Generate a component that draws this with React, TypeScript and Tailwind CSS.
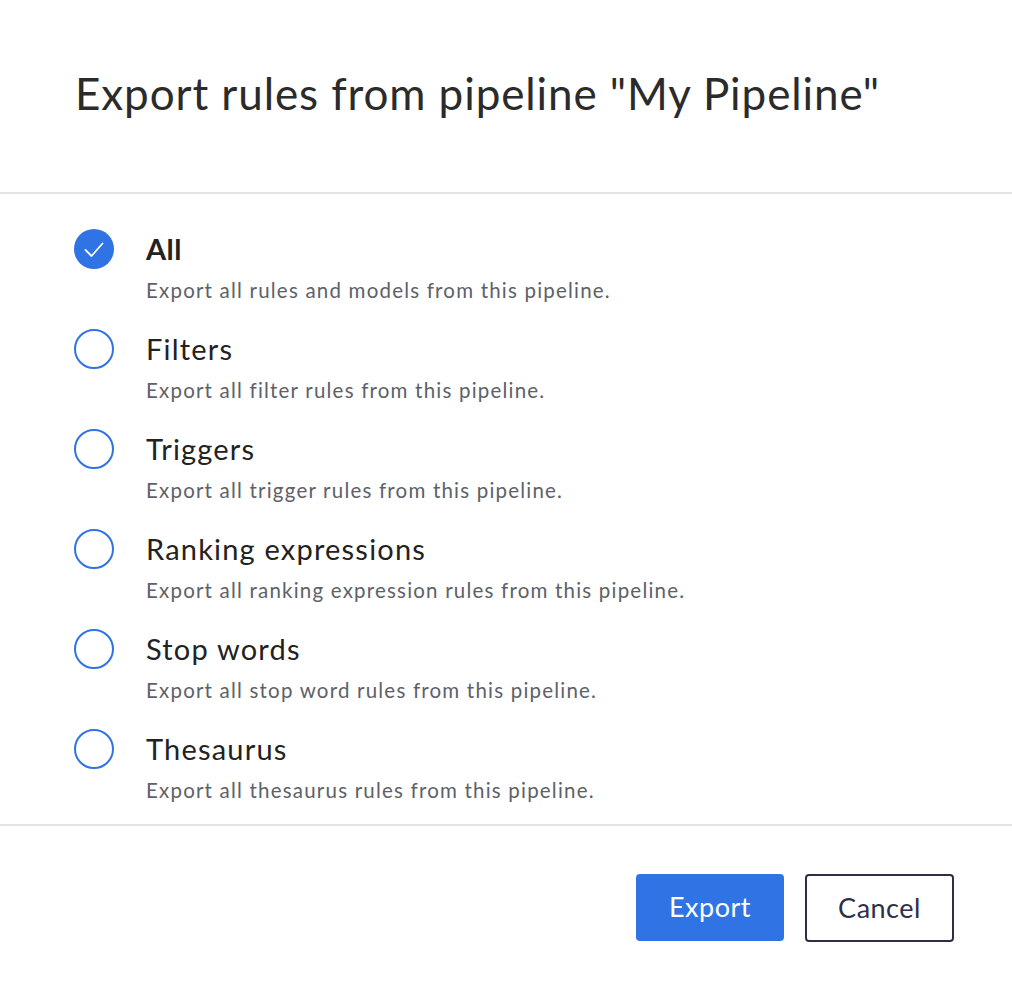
import { useState } from 'react';

const options = [
  { key: 'all', label: 'All', description: 'Export all rules and models from this pipeline.' },
  { key: 'filters', label: 'Filters', description: 'Export all filter rules from this pipeline.' },
  { key: 'triggers', label: 'Triggers', description: 'Export all trigger rules from this pipeline.' },
  { key: 'ranking', label: 'Ranking expressions', description: 'Export all ranking expression rules from this pipeline.' },
  { key: 'stopwords', label: 'Stop words', description: 'Export all stop word rules from this pipeline.' },
  { key: 'thesaurus', label: 'Thesaurus', description: 'Export all thesaurus rules from this pipeline.' },
];

const App = () => {
  const [selected, setSelected] = useState('all');

  return (
    <div className="w-[1012px] h-[982px] bg-white flex flex-col font-['Lato',sans-serif]">
      {/* Header */}
      <div className="h-[194px] flex items-center px-[75px] border-b-2 border-[#e3e3e3]">
        <h1 className="text-[44px] font-normal text-[#2b2b2b] leading-none tracking-[0.9px] -mt-[6px]">
          Export rules from pipeline "My Pipeline"
        </h1>
      </div>

      {/* Options */}
      <div className="flex flex-col px-[74px] pt-[35px] pb-[20px] border-b-2 border-[#e3e3e3]">
        {options.map((option, i) => {
          const checked = selected === option.key;
          return (
            <button
              key={option.key}
              className={`flex items-start gap-[32px] text-left ${i < options.length - 1 ? 'h-[100px]' : 'h-[75px]'}`}
              onClick={() => setSelected(option.key)}
            >
              {checked ? (
                <span className="w-[40px] h-[40px] rounded-full bg-[#3073e5] flex items-center justify-center shrink-0">
                  <svg width="22" height="17" viewBox="0 0 22 17" fill="none">
                    <path d="M2.5 9l6 6L19.5 2.5" stroke="white" strokeWidth="1.8" strokeLinecap="round" strokeLinejoin="round" />
                  </svg>
                </span>
              ) : (
                <span className="w-[40px] h-[40px] rounded-full border-2 border-[#3073e5] shrink-0" />
              )}
              <div className="flex flex-col">
                <span className={`text-[29px] leading-[40px] text-[#222] ${checked ? 'font-bold tracking-[0.5px]' : 'font-normal tracking-[1.2px]'}`}>
                  {option.label}
                </span>
                <span className="text-[20.5px] leading-[28px] mt-[7px] text-[#5d6168] tracking-[1.2px]">
                  {option.description}
                </span>
              </div>
            </button>
          );
        })}
      </div>

      {/* Footer */}
      <div className="flex justify-end gap-[21px] px-[58px] pt-[48px]">
        <button className="w-[148px] h-[67px] rounded-[4px] bg-[#3073e5] text-white text-[27px] tracking-[0.5px]">
          Export
        </button>
        <button className="w-[149px] h-[68px] rounded-[4px] border-2 border-[#2e2e48] text-[#2e2e48] text-[27px] tracking-[0.5px]">
          Cancel
        </button>
      </div>
    </div>
  );
};

export default App;
